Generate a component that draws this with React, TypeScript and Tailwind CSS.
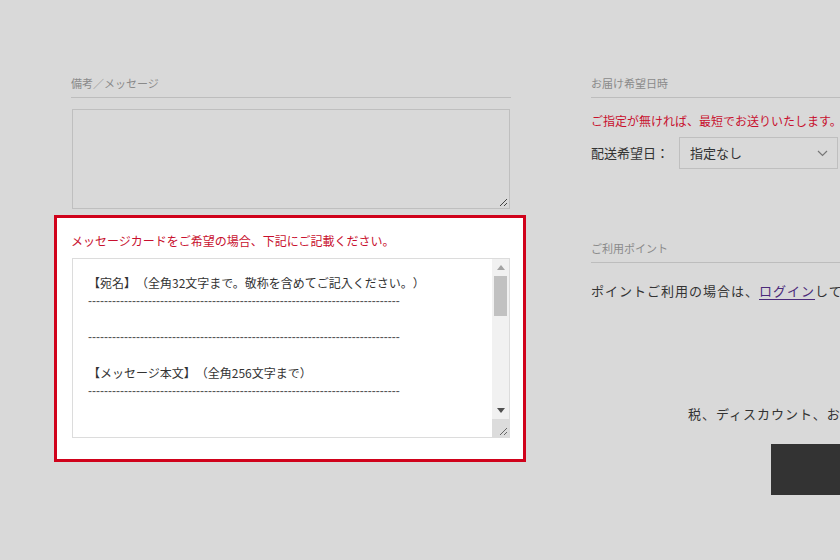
import React from "react";

const FONT = { fontFamily: '"Noto Sans CJK JP", "Noto Sans", sans-serif' };

const DASHES = "-".repeat(78);

function Grip({ color = "#555" }: { color?: string }) {
  return (
    <svg width="10" height="10" viewBox="0 0 10 10" className="block">
      <line x1="9" y1="2" x2="2" y2="9" stroke={color} strokeWidth="1" />
      <line x1="9" y1="6" x2="6" y2="9" stroke={color} strokeWidth="1" />
    </svg>
  );
}

function SectionLabel({ children }: { children: React.ReactNode }) {
  return (
    <div className="h-[23px] border-b border-[#bdbdbd] text-[11px] leading-[16px] text-[#8a8a8a]">
      {children}
    </div>
  );
}

function Dashes() {
  return (
    <div
      className="text-[12px] leading-[18px] text-[#555]"
      style={{ fontFamily: '"Liberation Sans", Arial, sans-serif' }}
    >
      {DASHES}
    </div>
  );
}

export default function App() {
  return (
    <div
      className="w-[840px] h-[560px] bg-[#d9d9d9] overflow-hidden flex pl-[71px] pt-[75px] [text-spacing-trim:space-all]"
      style={FONT}
    >
      {/* Left column */}
      <div className="w-[440px] shrink-0 flex flex-col">
        <SectionLabel>備考／メッセージ</SectionLabel>
        <div className="relative mt-[11px] ml-[1px] w-[438px] h-[100px] border border-[#bfbfbf]">
          <div className="absolute right-[1px] bottom-[1px]">
            <Grip color="#444" />
          </div>
        </div>

        {/* Red message card box */}
        <div className="mt-[6px] -ml-[17px] w-[472px] border-[3px] border-[#d0021b] bg-white pl-[14px] pt-[15px] pb-[21px]">
          <div className="text-[12px] leading-[16px] text-[#c8102e] whitespace-nowrap">
            メッセージカードをご希望の場合、下記にご記載ください。
          </div>
          <div className="mt-[9px] ml-[1px] w-[438px] h-[180px] border border-[#dcdcdc] flex">
            <div className="flex-1 overflow-hidden pl-[15px] pt-[15px] text-[12px] leading-[18px] text-[#333] whitespace-pre">
              <div>【宛名】（全角32文字まで。敬称を含めてご記入ください。）</div>
              <Dashes />
              <div>&nbsp;</div>
              <Dashes />
              <div>&nbsp;</div>
              <div>【メッセージ本文】（全角256文字まで）</div>
              <Dashes />
            </div>
            {/* Scrollbar */}
            <div className="w-[17px] shrink-0 flex flex-col bg-[#f1f1f1]">
              <div className="h-[17px] flex items-center justify-center">
                <svg width="8" height="5" viewBox="0 0 8 5">
                  <polygon points="4,0 8,5 0,5" fill="#a3a3a3" />
                </svg>
              </div>
              <div className="mx-[2px] h-[40px] bg-[#c1c1c1]" />
              <div className="flex-1" />
              <div className="h-[17px] flex items-center justify-center">
                <svg width="8" height="5" viewBox="0 0 8 5">
                  <polygon points="0,0 8,0 4,5" fill="#505050" />
                </svg>
              </div>
              <div className="h-[18px] bg-[#dcdcdc] flex items-end justify-end pr-[1px] pb-[1px]">
                <Grip color="#666" />
              </div>
            </div>
          </div>
        </div>
      </div>

      {/* Right column */}
      <div className="ml-[80px] w-[440px] shrink-0 flex flex-col">
        <SectionLabel>お届け希望日時</SectionLabel>
        <div className="mt-[15px] text-[12px] leading-[16px] text-[#c8102e] whitespace-nowrap">
          ご指定が無ければ、最短でお送りいたします。
        </div>
        <div className="mt-[8px] flex items-center">
          <div className="w-[88px] text-[13px] text-[#333] whitespace-nowrap">配送希望日：</div>
          <div className="w-[159px] h-[32px] border border-[#bfbfbf] flex items-center justify-between pl-[10px] pr-[9px]">
            <span className="text-[13px] text-[#333]">指定なし</span>
            <svg width="11" height="7" viewBox="0 0 11 7">
              <polyline points="1,1 5.5,5.5 10,1" fill="none" stroke="#777" strokeWidth="1.2" />
            </svg>
          </div>
        </div>

        <div className="mt-[71px]">
          <SectionLabel>ご利用ポイント</SectionLabel>
        </div>
        <div className="mt-[18px] text-[13px] leading-[20px] tracking-[1px] text-[#333] whitespace-nowrap">
          ポイントご利用の場合は、
          <span className="text-[#4b2a7b] underline underline-offset-[3px]">ログイン</span>
          してください。
        </div>

        <div className="mt-[103px] ml-[97px] text-[13px] leading-[20px] tracking-[1px] text-[#333] whitespace-nowrap">
          税、ディスカウント、およびお届け方法は購入手続き時に計算されます。
        </div>
        <div className="mt-[20px] ml-[180px] w-[200px] h-[51px] bg-[#333]" />
      </div>
    </div>
  );
}
